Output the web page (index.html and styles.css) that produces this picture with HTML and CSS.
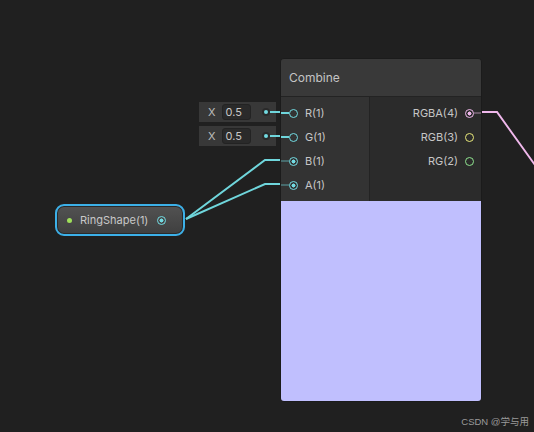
FILE: index.html
```html
<!DOCTYPE html>
<html>
<head>
<meta charset="utf-8">
<link rel="stylesheet" href="styles.css">
</head>
<body>
<div class="canvas">
  <div class="field f1"><span class="flabel">X</span><span class="fval">0.5</span><span class="fdot"></span></div>
  <div class="field f2"><span class="flabel">X</span><span class="fval">0.5</span><span class="fdot"></span></div>

  <svg class="wires" width="534" height="432" viewBox="0 0 534 432">
    <path d="M186 219 L265 160 L282 160" stroke="#6fd6dc" stroke-width="2" fill="none"/>
    <path d="M186 219 L265 184 L282 184" stroke="#6fd6dc" stroke-width="2" fill="none"/>
    <path d="M481 112 L497 112 L540 172" stroke="#f0b8ec" stroke-width="2" fill="none"/>
    <path d="M270 112 L282 112" stroke="#6fd6dc" stroke-width="2" fill="none"/>
    <path d="M270 136 L282 136" stroke="#6fd6dc" stroke-width="2" fill="none"/>
  </svg>

  <div class="node">
    <div class="node-head">Combine</div>
    <div class="node-body">
      <div class="col-in">
        <div class="port"><span class="stub lit"></span><span class="dot ring cyan"></span><span class="lbl">R(1)</span></div>
        <div class="port"><span class="stub lit"></span><span class="dot ring cyan"></span><span class="lbl">G(1)</span></div>
        <div class="port"><span class="stub"></span><span class="dot ring cyan fill"></span><span class="lbl">B(1)</span></div>
        <div class="port"><span class="stub"></span><span class="dot ring cyan fill"></span><span class="lbl">A(1)</span></div>
      </div>
      <div class="col-out">
        <div class="port out"><span class="lbl">RGBA(4)</span><span class="dot ring pink fill"></span><span class="stub pinkstub"></span></div>
        <div class="port out"><span class="lbl">RGB(3)</span><span class="dot ring yellow"></span><span class="stub none"></span></div>
        <div class="port out"><span class="lbl">RG(2)</span><span class="dot ring green"></span><span class="stub none"></span></div>
      </div>
    </div>
    <div class="preview"></div>
  </div>

  <div class="prop">
    <span class="pdot"></span>
    <span class="ptext">RingShape(1)</span>
    <span class="dot ring cyan fill"></span>
  </div>

  <div class="watermark">CSDN @学与用</div>
</div>
</body>
</html>
```

FILE: styles.css
```css
html, body {
  margin: 0;
  padding: 0;
  background: #202020;
}
.canvas {
  position: relative;
  width: 534px;
  height: 432px;
  overflow: hidden;
  background: #202020;
  font-family: Inter, "Noto Sans", "Noto Sans CJK SC", sans-serif;
  font-size: 11px;
  color: #c6c6c6;
}
.wires {
  position: absolute;
  left: 0;
  top: 0;
  z-index: 1;
}
.field {
  position: absolute;
  left: 199px;
  width: 77px;
  height: 20px;
  background: #383838;
  display: flex;
  align-items: center;
  box-sizing: border-box;
  padding-left: 9px;
  padding-right: 6px;
}
.f1 { top: 102px; }
.f2 { top: 126px; }
.flabel {
  color: #bdbdbd;
  font-size: 11px;
  margin-right: 6px;
}
.fval {
  width: 29px;
  height: 16px;
  box-sizing: border-box;
  background: #2a2a2a;
  border: 1px solid #232323;
  border-radius: 3px;
  padding-left: 3px;
  line-height: 14px;
  color: #c8c8c8;
}
.fdot {
  margin-left: auto;
  width: 8px;
  height: 8px;
  box-sizing: border-box;
  border-radius: 50%;
  border: 2px solid #2a2a2a;
  background: #72dbe2;
}
.node {
  position: absolute;
  z-index: 2;
  left: 280px;
  top: 58px;
  width: 200px;
  border: 1px solid #1b1b1b;
  border-radius: 4px;
  background: #2a2a2a;
  overflow: hidden;
}
.node-head {
  height: 37px;
  background: #393939;
  border-bottom: 1px solid #232323;
  display: flex;
  align-items: center;
  padding-left: 8px;
  font-size: 12px;
  color: #c4c4c4;
}
.node-body {
  display: flex;
  height: 104px;
}
.col-in {
  width: 89px;
  background: #333333;
  border-right: 1px solid #232323;
  padding-top: 4px;
  box-sizing: border-box;
}
.col-out {
  flex: 1;
  background: #2b2b2b;
  padding-top: 4px;
  box-sizing: border-box;
}
.port {
  height: 24px;
  display: flex;
  align-items: center;
}
.port.out {
  justify-content: flex-end;
}
.stub {
  width: 8px;
  height: 2px;
  background: #466a6c;
  flex: none;
}
.stub.lit { background: #6fd6dc; }
.stub.pinkstub { background: #6a5a68; width: 7px; }
.stub.none { background: transparent; width: 7px; }
.lbl { margin-left: 7px; }
.port.out .lbl { margin-left: 0; margin-right: 7px; }
.dot {
  display: inline-block;
  box-sizing: border-box;
  width: 9px;
  height: 9px;
  border-radius: 50%;
  flex: none;
}
.ring { border: 1.5px solid; }
.cyan { border-color: #72dbe2; }
.pink { border-color: #f0b8ec; }
.yellow { border-color: #e8e87a; }
.green { border-color: #8fe38f; }
.fill.cyan { background: radial-gradient(circle, #72dbe2 0 1.8px, transparent 2.2px); }
.fill.pink { background: radial-gradient(circle, #f0b8ec 0 1.8px, transparent 2.2px); }
.preview {
  height: 200px;
  background: #c0bffe;
}
.prop {
  position: absolute;
  z-index: 2;
  left: 55px;
  top: 204px;
  width: 130px;
  height: 32px;
  box-sizing: border-box;
  border: 2px solid #3cb0e8;
  border-radius: 9px;
  background: linear-gradient(#525252, #3f3f3f);
  box-shadow: inset 0 0 0 1px #2a2a2a;
  display: flex;
  align-items: center;
  padding-left: 10px;
  padding-right: 17px;
}
.pdot {
  width: 5px;
  height: 5px;
  border-radius: 50%;
  background: #9fe05a;
  flex: none;
}
.ptext {
  margin-left: 8px;
  flex: 1;
  color: #c8c8c8;
}
.watermark {
  position: absolute;
  right: 5px;
  top: 414px;
  font-family: "Liberation Sans", "Noto Sans CJK SC", sans-serif;
  font-size: 9.5px;
  color: #9a9a9a;
}
```
